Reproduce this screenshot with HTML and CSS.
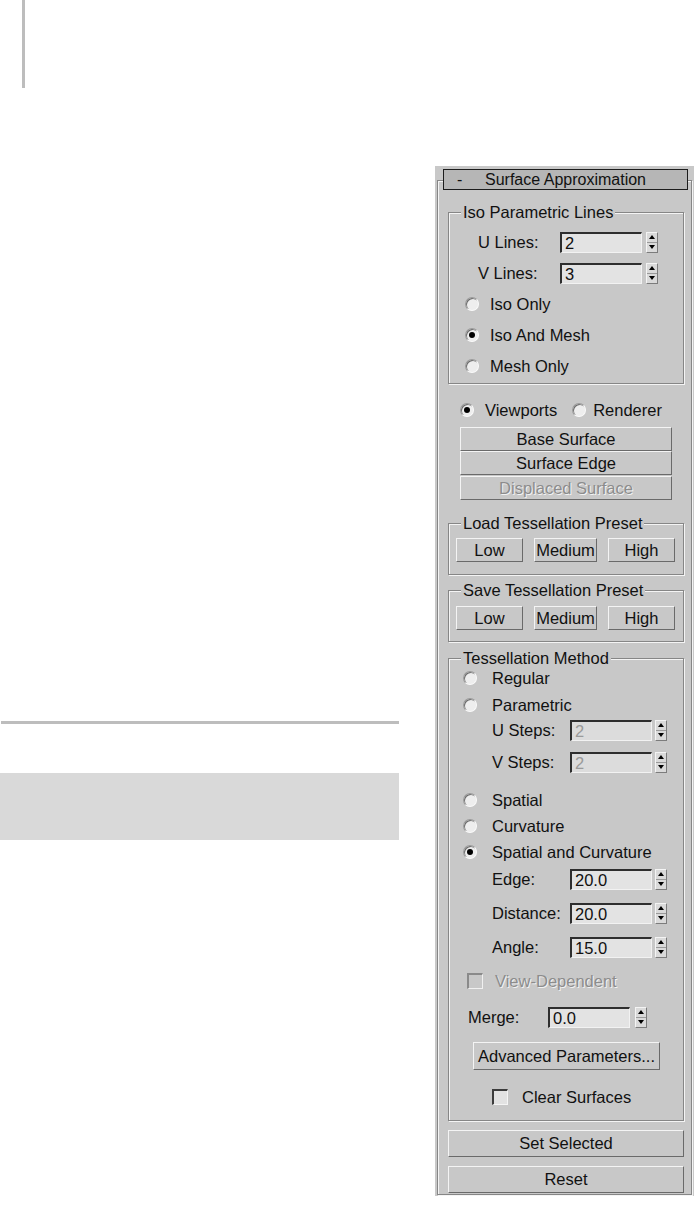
FILE: index.html
```html
<!DOCTYPE html>
<html lang="en">
<head>
    <meta charset="UTF-8">
    <meta name="viewport" content="width=device-width, initial-scale=1.0">
    <title>Surface Approximation</title>
    <link rel="stylesheet" href="styles.css">
</head>
<body>
    <div class="page">
        <!-- left margin of the manual page -->
        <div class="margin-col">
            <div class="top-rule"></div>
            <div class="mid-rule"></div>
            <div class="note-box"></div>
        </div>

        <!-- rollout -->
        <div class="rollout">
            <div class="rollout-title">
                <span class="collapse">-</span>
                <span class="rollout-name">Surface Approximation</span>
            </div>

            <div class="rollout-body">
                <div class="group">
                    <div class="group-title">Iso Parametric Lines</div>
                    <div class="iso-body">
                        <div class="spin-row iso-spin">
                            <span class="spin-label">U Lines:</span>
                            <span class="field">2</span>
                            <span class="arrows"></span>
                        </div>
                        <div class="spin-row iso-spin">
                            <span class="spin-label">V Lines:</span>
                            <span class="field">3</span>
                            <span class="arrows"></span>
                        </div>
                        <div class="radio-row iso-radio"><span class="radio"></span>Iso Only</div>
                        <div class="radio-row iso-radio"><span class="radio checked"></span>Iso And Mesh</div>
                        <div class="radio-row iso-radio"><span class="radio"></span>Mesh Only</div>
                    </div>
                </div>

                <div class="view-row">
                    <span class="radio checked"></span>
                    <span class="view-first">Viewports</span>
                    <span class="radio"></span>
                    <span class="view-second">Renderer</span>
                </div>

                <div class="surface-buttons">
                    <button class="btn">Base Surface</button>
                    <button class="btn">Surface Edge</button>
                    <button class="btn disabled">Displaced Surface</button>
                </div>

                <div class="group load">
                    <div class="group-title">Load Tessellation Preset</div>
                    <div class="preset-row">
                        <button class="btn">Low</button>
                        <button class="btn mid">Medium</button>
                        <button class="btn">High</button>
                    </div>
                </div>

                <div class="group save">
                    <div class="group-title">Save Tessellation Preset</div>
                    <div class="preset-row">
                        <button class="btn">Low</button>
                        <button class="btn mid">Medium</button>
                        <button class="btn">High</button>
                    </div>
                </div>

                <div class="group tess">
                    <div class="group-title">Tessellation Method</div>
                    <div class="tess-body">
                        <div class="radio-list first-radios">
                            <div class="radio-row tess-radio"><span class="radio"></span>Regular</div>
                            <div class="radio-row tess-radio"><span class="radio"></span>Parametric</div>
                        </div>
                        <div class="spin-list steps">
                            <div class="spin-row tess-spin">
                                <span class="spin-label">U Steps:</span>
                                <span class="field off">2</span>
                                <span class="arrows"></span>
                            </div>
                            <div class="spin-row tess-spin">
                                <span class="spin-label">V Steps:</span>
                                <span class="field off">2</span>
                                <span class="arrows"></span>
                            </div>
                        </div>
                        <div class="radio-list method-radios">
                            <div class="radio-row tess-radio"><span class="radio"></span>Spatial</div>
                            <div class="radio-row tess-radio"><span class="radio"></span>Curvature</div>
                            <div class="radio-row tess-radio"><span class="radio checked"></span>Spatial and Curvature</div>
                        </div>
                        <div class="spin-list dims">
                            <div class="spin-row tess-spin">
                                <span class="spin-label">Edge:</span>
                                <span class="field">20.0</span>
                                <span class="arrows"></span>
                            </div>
                            <div class="spin-row tess-spin">
                                <span class="spin-label">Distance:</span>
                                <span class="field">20.0</span>
                                <span class="arrows"></span>
                            </div>
                            <div class="spin-row tess-spin">
                                <span class="spin-label">Angle:</span>
                                <span class="field">15.0</span>
                                <span class="arrows"></span>
                            </div>
                        </div>
                        <div class="check-row view-dep">
                            <span class="check off"></span>
                            <span class="disabled">View-Dependent</span>
                        </div>
                        <div class="spin-row merge">
                            <span class="spin-label">Merge:</span>
                            <span class="field">0.0</span>
                            <span class="arrows"></span>
                        </div>
                        <button class="btn advanced">Advanced Parameters...</button>
                        <div class="check-row clear-row">
                            <span class="check"></span>
                            <span>Clear Surfaces</span>
                        </div>
                    </div>
                </div>

                <button class="btn wide">Set Selected</button>
                <button class="btn wide">Reset</button>
            </div>
        </div>
    </div>
</body>
</html>
```

FILE: styles.css
```css
body {
    margin: 0;
    background: #fff;
    font-family: "Liberation Sans", Arial, sans-serif;
    font-size: 16.5px;
    color: #111;
}

.page {
    display: flex;
    align-items: flex-start;
}

/* left column decoration */
.margin-col {
    flex: none;
    width: 400px;
}

.top-rule {
    width: 3px;
    height: 88px;
    margin-left: 22px;
    background: #bdbdbd;
}

.mid-rule {
    width: 398px;
    height: 3px;
    margin: 633px 0 0 1px;
    background: #bdbdbd;
}

.note-box {
    width: 399px;
    height: 67px;
    margin-top: 49px;
    background: #d9d9d9;
}

/* rollout panel */
.rollout {
    flex: none;
    width: 259px;
    margin: 166px 0 0 35px;
    padding: 3px 0 1px;
    background: #c8c8c8;
}

.rollout-title {
    position: relative;
    z-index: 1;
    display: grid;
    grid-template-columns: 1fr auto 1fr;
    align-items: center;
    box-sizing: border-box;
    height: 21px;
    margin: 0 6px 0 8px;
    border: 1px solid #1c1c1c;
    background: #b6b6b6;
    font-size: 16px;
}

.collapse {
    padding-left: 13px;
}

.rollout-body {
    margin: -10px 2px 0;
    padding: 31px 7px 1px 10px;
    border: 1px solid #868686;
    box-shadow: inset 1px 1px 0 #f4f4f4, 1px 1px 0 #f4f4f4;
}

/* group boxes */
.group {
    border: 1px solid #868686;
    box-shadow: inset 1px 1px 0 #f4f4f4, 1px 1px 0 #f4f4f4;
}

.group-title {
    width: max-content;
    height: 18px;
    line-height: 18px;
    margin: -10px 0 0 12px;
    padding: 0 2px;
    background: #c8c8c8;
}

.load {
    margin-top: 23px;
}

.save {
    margin-top: 15px;
}

.tess {
    margin-top: 16px;
}

.iso-body {
    display: flex;
    flex-direction: column;
    gap: 7px;
    padding: 9px 0 5px;
}

/* rows */
.spin-row,
.radio-row,
.check-row {
    display: flex;
    align-items: center;
    height: 24px;
}

.spin-label {
    flex: none;
}

.iso-spin {
    padding-left: 29px;
}

.iso-spin .spin-label {
    width: 82px;
}

.tess-spin {
    padding-left: 43px;
}

.tess-spin .spin-label {
    width: 78px;
}

.tess-spin .arrows {
    margin-left: 3px;
}

.merge {
    margin-top: 12px;
    padding-left: 19px;
}

.merge .spin-label {
    width: 80px;
}

.merge .arrows {
    margin-left: 5px;
}

.iso-radio {
    gap: 11px;
    padding-left: 16px;
}

.tess-radio {
    gap: 15px;
    padding-left: 14px;
}

.radio-list,
.spin-list {
    display: flex;
    flex-direction: column;
}

.first-radios {
    gap: 3px;
    margin-top: -1px;
}

.steps {
    gap: 8px;
    margin-top: 1px;
}

.method-radios {
    gap: 2px;
    margin-top: 14px;
}

.dims {
    gap: 10px;
    margin-top: 3px;
}

.tess-body {
    display: flex;
    flex-direction: column;
    padding-bottom: 11px;
}

.view-dep {
    gap: 12px;
    margin-top: 10px;
    padding-left: 18px;
}

.clear-row {
    gap: 14px;
    margin-top: 15px;
    padding-left: 43px;
}

.view-row {
    display: flex;
    align-items: center;
    height: 22px;
    margin-top: 15px;
    padding-left: 12px;
}

.view-first {
    margin: 0 15px 0 11px;
}

.view-second {
    margin-left: 7px;
}

/* controls */
.field {
    flex: none;
    box-sizing: border-box;
    width: 82px;
    height: 21px;
    padding-left: 3px;
    border-style: solid;
    border-width: 2px 1px 1px 2px;
    border-color: #2e2e2e #f2f2f2 #f2f2f2 #2e2e2e;
    background: #e3e3e3;
    line-height: 18px;
}

.field.off {
    color: #9a9a9a;
    background: #dcdcdc;
}

.arrows {
    flex: none;
    display: flex;
    flex-direction: column;
    justify-content: space-around;
    align-items: center;
    box-sizing: border-box;
    width: 12px;
    height: 21px;
    margin-left: 4px;
    border: 1px solid;
    border-color: #f4f4f4 #7c7c7c #7c7c7c #f4f4f4;
    background: linear-gradient(#dadada 0 9px, #9a9a9a 9px 10px, #dadada 10px);
}

.arrows::before,
.arrows::after {
    content: "";
    border: solid transparent;
}

.arrows::before {
    border-width: 0 3px 4px;
    border-bottom-color: #000;
}

.arrows::after {
    border-width: 4px 3px 0;
    border-top-color: #000;
}

.radio {
    flex: none;
    display: flex;
    align-items: center;
    justify-content: center;
    box-sizing: border-box;
    width: 14px;
    height: 14px;
    border-radius: 50%;
    border: 1px solid;
    border-color: #9a9a9a #fafafa #fafafa #9a9a9a;
    background: #eeeeee;
    box-shadow: inset 1px 1px 0 #6a6a6a;
}

.radio.checked::after {
    content: "";
    width: 6px;
    height: 6px;
    border-radius: 50%;
    background: #000;
}

.check {
    flex: none;
    box-sizing: border-box;
    width: 16px;
    height: 16px;
    border-style: solid;
    border-width: 2px 1px 1px 2px;
    border-color: #3c3c3c #f4f4f4 #f4f4f4 #3c3c3c;
    background: #e2e2e2;
}

.check.off {
    border-color: #8a8a8a #f0f0f0 #f0f0f0 #8a8a8a;
    background: #c8c8c8;
}

.btn {
    display: block;
    box-sizing: border-box;
    width: 100%;
    height: 24px;
    padding: 0;
    font: inherit;
    color: inherit;
    text-align: center;
    background: #c8c8c8;
    border: 1px solid;
    border-color: #f4f4f4 #6a6a6a #6a6a6a #f4f4f4;
}

.disabled {
    color: #8c8c8c;
    text-shadow: 1px 1px 0 #f2f2f2;
}

.surface-buttons {
    display: flex;
    flex-direction: column;
    margin: 6px 12px 0;
}

.surface-buttons .disabled {
    margin-top: 1px;
}

.preset-row {
    display: flex;
    gap: 11px;
    padding: 6px 8px 12px 7px;
}

.save .preset-row {
    padding-top: 7px;
    padding-bottom: 11px;
}

.preset-row .btn {
    width: 67px;
}

.preset-row .mid {
    width: 63px;
}

.advanced {
    width: 187px;
    height: 28px;
    margin: 13px 0 0 24px;
}

.wide {
    height: 27px;
    margin-top: 9px;
}
```
